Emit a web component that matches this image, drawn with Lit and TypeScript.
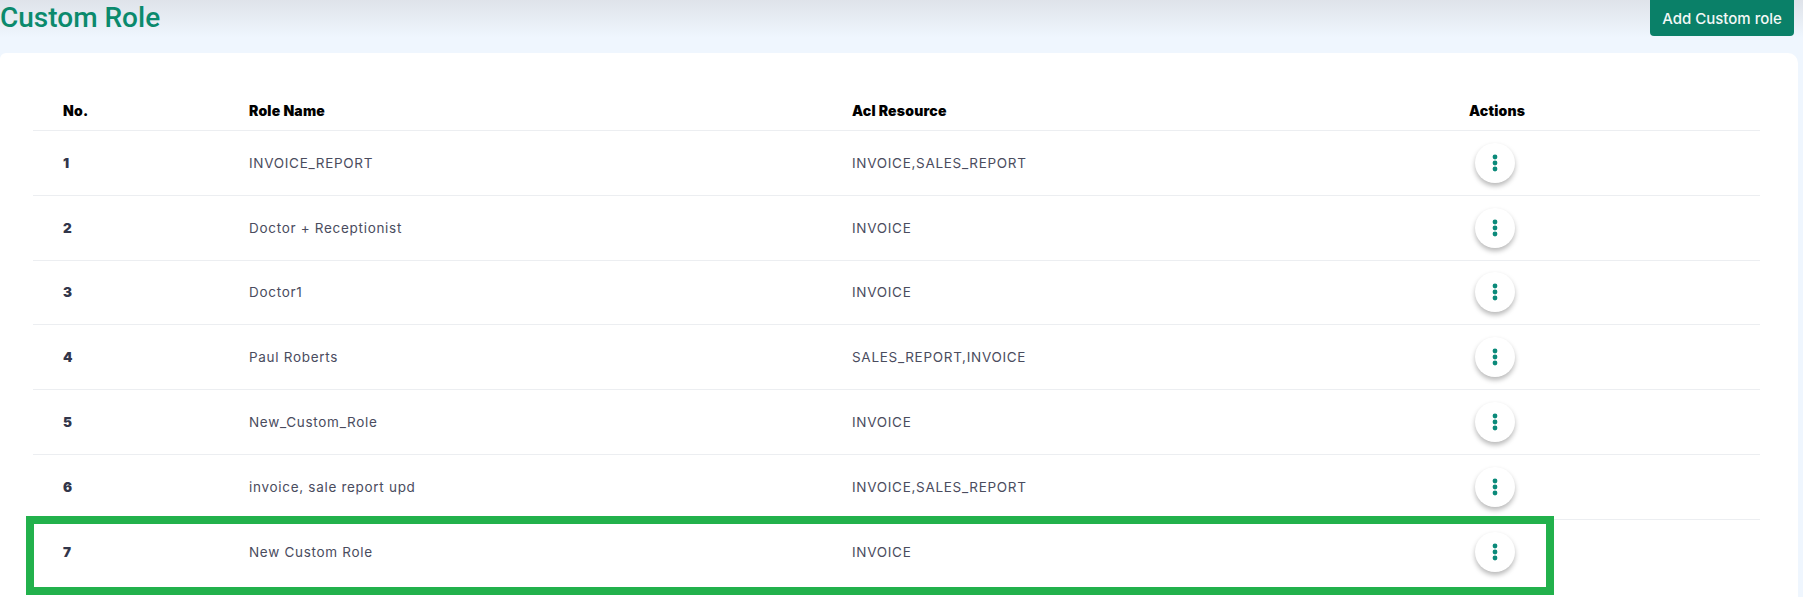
import { LitElement, html, css } from "lit";
import { customElement } from "lit/decorators.js";

const rows = [
  ["1", "INVOICE_REPORT", "INVOICE,SALES_REPORT"],
  ["2", "Doctor + Receptionist", "INVOICE"],
  ["3", "Doctor1", "INVOICE"],
  ["4", "Paul Roberts", "SALES_REPORT,INVOICE"],
  ["5", "New_Custom_Role", "INVOICE"],
  ["6", "invoice, sale report upd", "INVOICE,SALES_REPORT"],
  ["7", "New Custom Role", "INVOICE"],
];

@customElement("app-root")
export class AppRoot extends LitElement {
  static styles = css`
    :host {
      display: block;
      position: relative;
      height: 597px;
      overflow: hidden;
      background: #eff6fe;
      font-family: "Inter", "Liberation Sans", sans-serif;
    }
    .top {
      display: flex;
      justify-content: space-between;
      align-items: flex-start;
      height: 53px;
      padding-right: 9px;
      background: linear-gradient(180deg, #dfe3ea 0%, #eff6fe 38px);
    }
    h1 {
      margin: 0;
      font: 500 28px/36px "Roboto", sans-serif;
      color: #0b8a6d;
    }
    .add {
      width: 144px;
      height: 36px;
      border: 0;
      border-radius: 0 0 4px 4px;
      background: #0a8068;
      color: #f4f8f7;
      font: 500 15px "Inter", sans-serif;
      padding: 0;
    }
    .card {
      margin-right: 5px;
      height: 544px;
      padding: 13px 38px 0 33px;
      background: #fff;
      border-radius: 6px 10px 0 0;
      box-sizing: border-box;
    }
    .row {
      display: grid;
      grid-template-columns: 186px 603px 617px 1fr;
      align-items: center;
      height: 64.8px;
      box-sizing: border-box;
      border-bottom: 1px solid #eceef1;
      font-size: 13.5px;
      letter-spacing: 0.7px;
      color: #4a4c5e;
    }
    .row > * {
      padding-left: 30px;
    }
    .head {
      height: 65px;
      padding-top: 24px;
      font-size: 14px;
      font-weight: 900;
      color: #000;
      letter-spacing: 0.2px;
    }
    .no {
      font-weight: 900;
      color: #32364a;
    }
    .last {
      border-bottom: 0;
    }
    .menu {
      display: block;
      width: 40px;
      height: 40px;
      margin-left: 6px;
      padding: 0;
      border: 0;
      border-radius: 50%;
      background: #fff;
      box-shadow: 0 3px 5px rgba(0, 0, 0, 0.28);
    }
    .menu svg {
      display: block;
      margin: 10px auto;
    }
    .line-end {
      position: absolute;
      left: 1554px;
      top: 519px;
      width: 206px;
      height: 1px;
      background: #eceef1;
    }
    .highlight {
      position: absolute;
      left: 26px;
      top: 516px;
      width: 1528px;
      height: 79px;
      box-sizing: border-box;
      border: 8px solid #22b14c;
      pointer-events: none;
    }
  `;

  render() {
    return html`
      <div class="top">
        <h1>Custom Role</h1>
        <button class="add">Add Custom role</button>
      </div>
      <div class="card">
        <div class="row head">
          <span>No.</span><span>Role Name</span><span>Acl Resource</span><span>Actions</span>
        </div>
        ${rows.map(
          (r, i) => html`
            <div class="row ${i === rows.length - 1 ? "last" : ""}">
              <span class="no">${r[0]}</span><span>${r[1]}</span><span>${r[2]}</span>
              <div>
                <button class="menu" aria-label="More actions">
                  <svg width="20" height="20" viewBox="0 0 20 20" fill="#0b8a7a">
                    <circle cx="10" cy="4" r="2.4" />
                    <circle cx="10" cy="10" r="2.4" />
                    <circle cx="10" cy="16" r="2.4" />
                  </svg>
                </button>
              </div>
            </div>
          `
        )}
      </div>
      <div class="highlight"></div>
    `;
  }
}
